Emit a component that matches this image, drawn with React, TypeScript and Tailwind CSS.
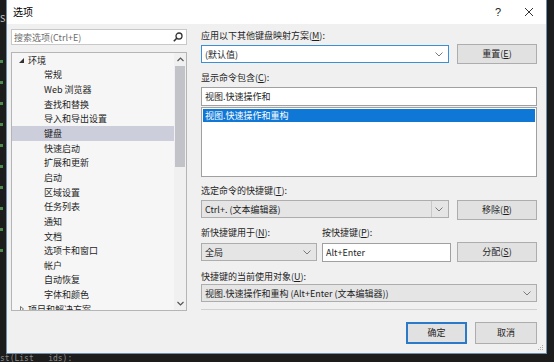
import React from "react";

const Chevron = ({ className = "" }: { className?: string }) => (
  <svg width="8" height="5" viewBox="0 0 8 5" className={className}>
    <path d="M0.5 0.5 L4 4 L7.5 0.5" fill="none" stroke="#7a7a7a" strokeWidth="1" />
  </svg>
);

const UpChevron = () => (
  <svg width="7" height="5" viewBox="0 0 7 5">
    <path d="M0.5 4 L3.5 1 L6.5 4" fill="none" stroke="#555" strokeWidth="1.2" />
  </svg>
);

const DownChevron = () => (
  <svg width="7" height="5" viewBox="0 0 7 5">
    <path d="M0.5 1 L3.5 4 L6.5 1" fill="none" stroke="#555" strokeWidth="1.2" />
  </svg>
);

const Magnifier = () => (
  <svg width="10" height="10" viewBox="0 0 10 10">
    <circle cx="6" cy="4" r="3" fill="none" stroke="#333" strokeWidth="1.3" />
    <path d="M4 6 L0.8 9.2" stroke="#333" strokeWidth="1.6" />
  </svg>
);

const treeChildren = [
  "常规",
  "Web 浏览器",
  "查找和替换",
  "导入和导出设置",
  "键盘",
  "快速启动",
  "扩展和更新",
  "启动",
  "区域设置",
  "任务列表",
  "通知",
  "文档",
  "选项卡和窗口",
  "帐户",
  "自动恢复",
  "字体和颜色",
];

function Label({ children, className = "" }: { children: React.ReactNode; className?: string }) {
  return (
    <div className={"h-[14px] leading-[14px] text-[9px] text-[#1e1e1e] " + className}>{children}</div>
  );
}

function Button({ children, className = "" }: { children: React.ReactNode; className?: string }) {
  return (
    <div
      className={
        "h-[20px] w-[80px] border border-[#adadad] bg-[#e1e1e1] flex items-center justify-center text-[9px] text-[#1e1e1e] " +
        className
      }
    >
      {children}
    </div>
  );
}

export default function App() {
  return (
    <div
      className="w-[554px] h-[362px] bg-[#1c1c1c] overflow-hidden relative"
      style={{ fontFamily: '"Noto Sans CJK SC", "Noto Sans", sans-serif' }}
    >
      {/* background code fragments */}
      <div className="absolute left-0 top-[14px] text-[9px] text-[#c8c8c8] leading-none">S</div>
      <div className="absolute left-0 top-[60px] w-[5px] flex flex-col gap-[18px]">
        <div className="h-[3px] w-[3px] bg-[#4e8a4e]" />
        <div className="h-[3px] w-[3px] bg-[#4e8a4e]" />
        <div className="h-[3px] w-[3px] bg-[#4e8a4e]" />
        <div className="h-[3px] w-[3px] bg-[#4e8a4e]" />
        <div className="h-[3px] w-[3px] bg-[#4e8a4e]" />
        <div className="h-[3px] w-[3px] bg-[#4e8a4e]" />
        <div className="h-[3px] w-[3px] bg-[#4e8a4e]" />
        <div className="h-[3px] w-[3px] bg-[#4e8a4e]" />
        <div className="h-[3px] w-[3px] bg-[#4e8a4e]" />
        <div className="h-[3px] w-[3px] bg-[#4e8a4e]" />
      </div>
      <div
        className="absolute left-[0px] top-[355px] text-[8px] text-[#8a8a8a] leading-[7px] whitespace-pre"
        style={{ fontFamily: '"DejaVu Sans Mono", monospace' }}
      >
        {"st(List   ids):"}
      </div>

      <div className="pl-[6px] pr-[7px] h-[354px] relative">
        <div className="w-[541px] h-[354px] flex flex-col bg-[#f0f0f0] border-x border-b border-[#6e8fb0]">
          {/* title bar */}
          <div className="h-[24px] bg-white flex items-center pl-[6px] pr-[12px] shrink-0">
            <div className="text-[10px] text-black leading-none">选项</div>
            <div className="ml-auto text-[11px] text-[#222] leading-none" style={{ fontFamily: '"Liberation Sans", sans-serif' }}>
              ?
            </div>
            <svg width="10" height="10" viewBox="0 0 10 10" className="ml-[23px]">
              <path d="M1 1 L9 9 M9 1 L1 9" stroke="#333" strokeWidth="1" />
            </svg>
          </div>

          {/* body */}
          <div className="flex-1 flex pl-[4px] pt-[5px] relative">
            {/* left column */}
            <div className="w-[176px] flex flex-col">
              <div className="h-[16px] border border-[#c8c8c8] bg-white flex items-center pl-[2px] pr-[3px]">
                <span className="text-[9px] text-[#6d6d6d] leading-none">搜索选项(Ctrl+E)</span>
                <span className="ml-auto flex">
                  <Magnifier />
                </span>
              </div>
              <div className="mt-[7px] h-[259px] border border-[#b5b5b5] bg-[#f6f6f6] flex overflow-hidden">
                <div className="flex-1 flex flex-col">
                  <div className="h-[14.65px] shrink-0 flex items-center text-[9px] text-[#1e1e1e] leading-none">
                    <svg width="5" height="5" viewBox="0 0 5 5" className="ml-[7px]">
                      <path d="M5 0 L5 5 L0 5 Z" fill="#333" />
                    </svg>
                    <span className="ml-[4px]">环境</span>
                  </div>
                  {treeChildren.map((t) => (
                    <div
                      key={t}
                      className={
                        "h-[14.65px] shrink-0 flex items-center text-[9px] text-[#1e1e1e] leading-none pl-[32px] " +
                        (t === "键盘" ? "bg-[#cccedb]" : "")
                      }
                    >
                      {t}
                    </div>
                  ))}
                  <div className="h-[14.65px] shrink-0 flex items-center text-[9px] text-[#1e1e1e] leading-none">
                    <svg width="4" height="6" viewBox="0 0 4 6" className="ml-[8px]">
                      <path d="M0.5 0.5 L3.5 3 L0.5 5.5 Z" fill="none" stroke="#555" strokeWidth="0.8" />
                    </svg>
                    <span className="ml-[4px]">项目和解决方案</span>
                  </div>
                </div>
                {/* scrollbar */}
                <div className="w-[12px] bg-[#f0f0f0] flex flex-col items-center">
                  <div className="h-[13px] flex items-center justify-center">
                    <UpChevron />
                  </div>
                  <div className="w-[10px] h-[101px] bg-[#c2c3c9]" />
                  <div className="flex-1" />
                  <div className="h-[13px] flex items-center justify-center">
                    <DownChevron />
                  </div>
                </div>
              </div>
            </div>

            {/* right column */}
            <div className="ml-[14px] w-[336px] flex flex-col">
              <Label>应用以下其他键盘映射方案(<span className="underline">M</span>):</Label>
              <div className="mt-[1px] h-[20px] flex items-center">
                <div className="h-[18px] w-[248px] border border-[#3c8ed6] bg-white flex items-center pl-[3px] pr-[5px]">
                  <span className="text-[9px] text-[#1e1e1e] leading-none">(默认值)</span>
                  <Chevron className="ml-auto" />
                </div>
                <Button className="ml-auto">重置(<span className="underline">E</span>)</Button>
              </div>

              <Label className="mt-[7px]">显示命令包含(<span className="underline">C</span>):</Label>
              <div className="mt-[2px] h-[19px] border border-[#a0a0a0] bg-white flex items-center pl-[3px] text-[9px] text-[#1e1e1e] leading-none">
                视图.快速操作和
              </div>
              <div className="mt-[1px] h-[70px] border border-[#a0a0a0] bg-white p-[1px]">
                <div className="h-[13px] bg-[#0f78d7] text-white text-[9px] leading-[13px] pl-[2px]">
                  视图.快速操作和重构
                </div>
              </div>

              <Label className="mt-[7px]">选定命令的快捷键(<span className="underline">T</span>):</Label>
              <div className="mt-[2px] h-[20px] flex items-start">
                <div className="h-[18px] w-[248px] border border-[#adadad] bg-[#e5e5e5] flex items-center pl-[3px] pr-[5px]">
                  <span className="text-[9px] text-[#1e1e1e] leading-none">Ctrl+. (文本编辑器)</span>
                  <div className="ml-auto h-[16px] border-l border-[#c8c8c8] pl-[3px] flex items-center">
                    <Chevron />
                  </div>
                </div>
                <Button className="ml-auto">移除(<span className="underline">R</span>)</Button>
              </div>

              <div className="mt-[6px] flex">
                <Label className="w-[121px]">新快捷键用于(<span className="underline">N</span>):</Label>
                <Label>按快捷键(<span className="underline">P</span>):</Label>
              </div>
              <div className="mt-[2px] h-[20px] flex items-center">
                <div className="h-[18px] w-[116px] border border-[#adadad] bg-[#e5e5e5] flex items-center pl-[3px] pr-[5px]">
                  <span className="text-[9px] text-[#1e1e1e] leading-none">全局</span>
                  <Chevron className="ml-auto" />
                </div>
                <div className="ml-[5px] h-[19px] w-[129px] border border-[#a0a0a0] bg-white flex items-center pl-[3px] text-[9px] text-[#1e1e1e] leading-none">
                  Alt+Enter
                </div>
                <Button className="ml-auto">分配(<span className="underline">S</span>)</Button>
              </div>

              <Label className="mt-[8px]">快捷键的当前使用对象(<span className="underline">U</span>):</Label>
              <div className="h-[18px] border border-[#adadad] bg-[#e5e5e5] flex items-center pl-[3px] pr-[5px]">
                <span className="text-[9px] text-[#1e1e1e] leading-none">视图.快速操作和重构 (Alt+Enter (文本编辑器))</span>
                <Chevron className="ml-auto" />
              </div>

              <div className="mt-[7px] h-px bg-[#d0d0d0]" />

              <div className="mt-[12px] flex justify-end gap-[8px]">
                <div className="h-[22px] w-[61px] border-2 border-[#2b79c9] bg-[#e1e1e1] flex items-center justify-center text-[9px] text-[#1e1e1e]">
                  确定
                </div>
                <div className="h-[22px] w-[62px] border border-[#adadad] bg-[#e1e1e1] flex items-center justify-center text-[9px] text-[#1e1e1e]">
                  取消
                </div>
              </div>
            </div>

            {/* resize grip */}
            <svg width="6" height="6" viewBox="0 0 6 6" className="absolute right-[2px] bottom-[2px]">
              <rect x="4" y="4" width="1" height="1" fill="#aaa" />
              <rect x="2" y="4" width="1" height="1" fill="#aaa" />
              <rect x="4" y="2" width="1" height="1" fill="#aaa" />
              <rect x="0" y="4" width="1" height="1" fill="#aaa" />
              <rect x="2" y="2" width="1" height="1" fill="#aaa" />
              <rect x="4" y="0" width="1" height="1" fill="#aaa" />
            </svg>
          </div>
        </div>
      </div>
    </div>
  );
}
